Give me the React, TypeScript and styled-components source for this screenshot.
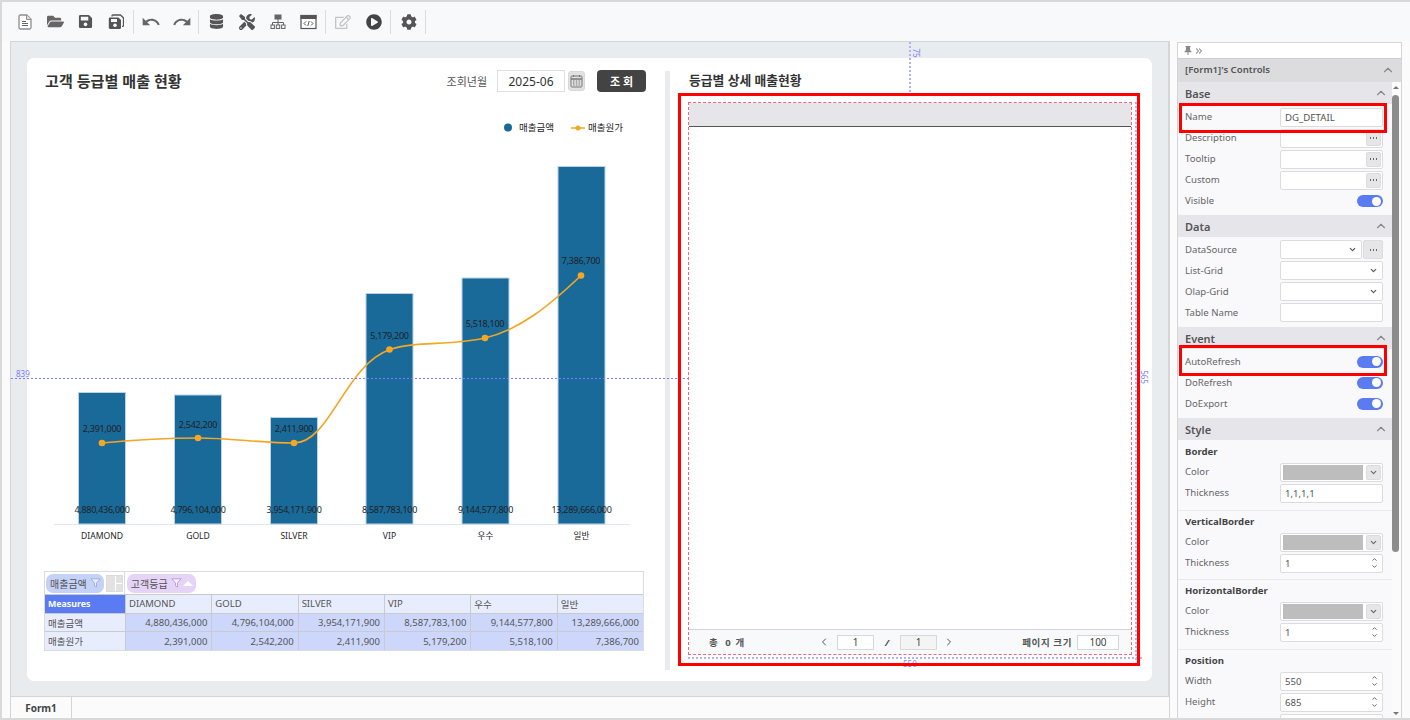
import React from "react";
import styled, { createGlobalStyle } from "styled-components";
import {
  FaCog,
  FaDatabase,
  FaFolderOpen,
  FaPlayCircle,
  FaRegEdit,
  FaSave,
  FaTools,
} from "react-icons/fa";
import { MdRedo, MdUndo } from "react-icons/md";
import { ChevronDown, ChevronLeft, ChevronRight, ChevronUp, ChevronsRight } from "lucide-react";

const GlobalStyle = createGlobalStyle`
  html, body {
    margin: 0;
    padding: 0;
    background: #fbfbfc;
    font-family: "Noto Sans", "Noto Sans CJK KR", sans-serif;
    color: #444;
  }
  * { box-sizing: border-box; }
`;

const bars = [
  { name: "DIAMOND", cx: 102, top: 392.5, value: "4,880,436,000", cost: "2,391,000", px: 102, py: 443, ly: 428.5 },
  { name: "GOLD", cx: 198, top: 395, value: "4,796,104,000", cost: "2,542,200", px: 198, py: 438, ly: 424 },
  { name: "SILVER", cx: 294, top: 417.5, value: "3,954,171,900", cost: "2,411,900", px: 294, py: 443, ly: 428 },
  { name: "VIP", cx: 389.5, top: 293.5, value: "8,587,783,100", cost: "5,179,200", px: 389.5, py: 349.5, ly: 335.5 },
  { name: "우수", cx: 485.5, top: 278, value: "9,144,577,800", cost: "5,518,100", px: 485, py: 338, ly: 323.5 },
  { name: "일반", cx: 581.5, top: 166.5, value: "13,289,666,000", cost: "7,386,700", px: 581, py: 275.5, ly: 260 },
];

const FileIcon = () => (
  <svg width="15" height="16" viewBox="0 0 15 16">
    <path d="M2.5 1h6.2L13 5.2V13.5a1.5 1.5 0 0 1-1.5 1.5h-9A1.5 1.5 0 0 1 1 13.5V2.5A1.5 1.5 0 0 1 2.5 1z" fill="#fff" stroke="#8d8d8d" strokeWidth="1.3" />
    <path d="M8.5 1v4.5H13" fill="#ddd" stroke="#8d8d8d" />
    <path d="M4 7.5h4M4 9.5h6M4 11.5h6" stroke="#666" strokeWidth="1.2" />
  </svg>
);

const SaveAllIcon = () => (
  <svg width="16" height="16" viewBox="0 0 16 16">
    <path d="M4 2.5V1.800c0-.5.4-.8.8-.8h7.700L15.500 4v7.500c0 .5-.4.9-.9.9H14" fill="none" stroke="#555" strokeWidth="1.3" />
    <path d="M2 3.500h8.500L13 6v7.800c0 .7-.5 1.200-1.200 1.200H2c-.7 0-1.200-.5-1.200-1.200V4.700C.8 4 1.300 3.500 2 3.500z" fill="#555" />
    <rect x="3" y="5" width="6" height="3" fill="#fff" />
    <circle cx="7" cy="11.3" r="1.8" fill="#fff" />
  </svg>
);

const SitemapIcon = () => (
  <svg width="16" height="16" viewBox="0 0 16 16" fill="none" stroke="#666" strokeWidth="1">
    <rect x="5" y="1" width="6" height="4" fill="#666" />
    <path d="M8 5v3.500M2.500 11V8.500h11V11M8 8.500V11" />
    <rect x="1" y="11" width="3.4" height="3.5" />
    <rect x="6.3" y="11" width="3.4" height="3.5" />
    <rect x="11.6" y="11" width="3.4" height="3.5" />
  </svg>
);

const CodeWindowIcon = () => (
  <svg width="17" height="16" viewBox="0 0 17 16" fill="none" stroke="#555">
    <rect x="1" y="1.5" width="15" height="13" fill="#fff" strokeWidth="1.2" />
    <rect x="1" y="1.5" width="15" height="3" fill="#555" />
    <path d="M6 7.500 4 9.500l2 2M11 7.500l2 2-2 2M9.200 7l-1.400 5" strokeWidth="1" />
  </svg>
);

const CalendarIcon = () => (
  <svg width="13" height="14" viewBox="0 0 13 14" fill="none" stroke="#777">
    <rect x="1" y="2" width="11" height="11" rx="1" />
    <path d="M1 5h11" strokeWidth="1.5" />
    <path d="M3.500 1v2M9.500 1v2M3 7h1.500M5.800 7h1.500M8.600 7h1.500M3 9h1.500M5.800 9h1.500M8.600 9h1.500M3 11h1.500M5.800 11h1.500M8.600 11h1.500" />
  </svg>
);

const PinIcon = () => (
  <svg width="8" height="9" viewBox="0 0 8 9">
    <path d="M1.500 0h5v1l-.7.5.5 3 1.200 1v.8H4.500V9h-1V6.300H.5v-.8l1.200-1 .5-3-.7-.5z" fill="#888" />
  </svg>
);

const FunnelIcon = ({ color }: { color: string }) => (
  <svg width="11" height="10" viewBox="0 0 11 10">
    <path d="M.8.800h9.400L6.500 5v4L4.500 8V5z" fill="#fff" fillOpacity="0.6" stroke={color} strokeWidth="0.9" />
  </svg>
);

const Toolbar = styled.div`
  display: flex;
  align-items: center;
  height: 39px;
  padding-left: 8px;
  background: #f8f9fb;
  flex-shrink: 0;
`;

const ToolButton = styled.div`
  width: 30.4px;
  height: 30px;
  display: flex;
  align-items: center;
  justify-content: center;
`;

const ToolSep = styled.div`
  width: 1px;
  height: 24px;
  margin: 0 2.4px 0 1.3px;
  background: #dcdce0;
`;

const Frame = styled.div`
  position: relative;
  width: 1410px;
  height: 720px;
  overflow: hidden;
  display: flex;
  flex-direction: column;
  border-top: 2px solid #d9d9d9;
  border-left: 2px solid #d9d9d9;
  border-bottom: 2px solid #d9d9d9;
`;

const Body = styled.div`
  display: flex;
  flex: 1;
  min-height: 0;
`;

const CanvasColumn = styled.div`
  width: 1160px;
  margin-left: 8px;
  display: flex;
  flex-direction: column;
  flex-shrink: 0;
`;

const Designer = styled.div`
  height: 655px;
  padding: 16px 16px 15px 16px;
  background: #e9ecef;
  border-top: 1px solid #d5d5d8;
  border-left: 1px solid #d5d5d8;
  border-right: 2px solid #d5d5d8;
`;

const Card = styled.div`
  display: flex;
  height: 100%;
  width: 1125px;
  background: #fff;
  border-radius: 7px;
`;

const LeftPane = styled.div`
  width: 638px;
  flex-shrink: 0;
`;

const PaneHeader = styled.div`
  display: flex;
  align-items: center;
  height: 22px;
  margin-top: 12px;
  padding-left: 18px;
  padding-right: 19px;
`;

const Title = styled.h2`
  margin: 0 0 3px;
  font-size: 15.1px;
  font-weight: 700;
  color: #333;
  white-space: pre;
`;

const SubTitle = styled(Title)`
  font-size: 12.8px;
`;

const SearchLabel = styled.span`
  margin-left: auto;
  font-size: 11px;
  color: #555;
`;

const MonthInput = styled.div`
  width: 68px;
  height: 22px;
  margin-left: 10px;
  display: flex;
  align-items: center;
  justify-content: center;
  font-size: 12px;
  color: #333;
  border: 1px solid #dfdfdf;
`;

const CalendarButton = styled.div`
  width: 17px;
  height: 20px;
  margin-left: 3px;
  display: flex;
  align-items: center;
  justify-content: center;
  background: #e2e2e4;
  border: 1px solid #d8d8da;
  border-radius: 3px;
`;

const SearchButton = styled.div`
  width: 49px;
  height: 22px;
  margin-left: 12px;
  display: flex;
  align-items: center;
  justify-content: center;
  font-size: 11px;
  font-weight: 700;
  color: #fff;
  background: #434343;
  border-radius: 4px;
  white-space: pre;
`;

const ChartSvg = styled.svg`
  display: block;
  margin-top: 18px;
`;

const ChartText = styled.text<{ $size?: number }>`
  font-family: "Noto Sans", "Noto Sans CJK KR", sans-serif;
  font-size: ${(p) => p.$size ?? 9}px;
  letter-spacing: ${(p) => (p.$size ? 0 : -0.27)}px;
  fill: #1f1f1f;
  text-anchor: middle;
  dominant-baseline: central;
`;

const LegendText = styled(ChartText)`
  text-anchor: start;
`;

const PivotGrid = styled.div`
  width: 600px;
  margin: 16px 0 0 17px;
  border: 1px solid #dcdcde;
  font-size: 9.5px;
`;

const PivotTools = styled.div`
  display: flex;
  align-items: center;
  height: 22px;
  padding-left: 1px;
  background: #fff;
`;

const Chip = styled.div<{ $bg: string }>`
  display: flex;
  align-items: center;
  height: 19px;
  padding: 0 3px 0 4px;
  gap: 3px;
  border-radius: 7px;
  background: ${(p) => p.$bg};
  color: #555;
  font-size: 10px;
`;

const ChipArrow = styled.span`
  width: 0;
  height: 0;
  margin-left: -2px;
  border-left: 5px solid transparent;
  border-right: 5px solid transparent;
  border-bottom: 5px solid #fff;
`;

const LayoutButton = styled.div`
  display: grid;
  grid-template-columns: 8px 6px;
  grid-template-rows: 1fr 1fr;
  gap: 1px;
  width: 17px;
  height: 17px;
  margin: 0 1px 0 2px;
  border: 1px solid #dcdcdc;
  background: #fff;
`;

const LayoutPane = styled.i<{ $tall?: boolean }>`
  display: block;
  background: #e2e2e2;
  ${(p) => (p.$tall ? "grid-row: span 2;" : "")}
`;

const PivotSep = styled.div`
  width: 1px;
  height: 22px;
  margin-right: 2px;
  background: #dcdcde;
`;

const PivotTable = styled.div`
  display: grid;
  grid-template-columns: 80px repeat(6, 1fr);
  grid-auto-rows: 18.7px;
`;

const PivotCell = styled.div<{ $kind: "corner" | "head" | "value" }>`
  display: flex;
  align-items: center;
  padding: 0 4px 0 3px;
  white-space: nowrap;
  border-top: 1px solid #c9cad0;
  border-left: 1px solid #c9cad0;
  justify-content: ${(p) => (p.$kind === "value" ? "flex-end" : "flex-start")};
  background: ${(p) => (p.$kind === "corner" ? "#5b7bf3" : p.$kind === "head" ? "#e8edfd" : "#ccd7fb")};
  color: ${(p) => (p.$kind === "corner" ? "#fff" : "#555")};
  font-weight: ${(p) => (p.$kind === "corner" ? 700 : 400)};
  font-size: ${(p) => (p.$kind === "corner" ? 8.8 : 9.5)}px;
  &:nth-child(7n + 1) {
    border-left: none;
  }
`;

const Divider = styled.div`
  width: 5px;
  height: 599px;
  margin-top: 13px;
  background: #e9ecef;
  flex-shrink: 0;
`;

const RightPane = styled.div`
  flex: 1;
  min-width: 0;
`;

const DetailHeader = styled(PaneHeader)`
  padding-left: 19px;
`;

const DetailGrid = styled.div`
  display: flex;
  flex-direction: column;
  width: 442px;
  height: 551px;
  margin: 11px 0 0 19px;
  outline: 1px dashed #ee6a78;
`;

const DetailHead = styled.div`
  height: 24px;
  background: #e6e6ea;
  border-bottom: 1px solid #555;
`;

const DetailBody = styled.div`
  flex: 1;
  background: #fff;
`;

const DetailFooter = styled.div`
  display: flex;
  align-items: center;
  height: 25px;
  background: #f8f9fb;
  border-top: 1px solid #d5d5d8;
  font-size: 9.5px;
  font-weight: 700;
  color: #555;
`;

const TotalText = styled.span`
  width: 129px;
  padding-left: 20px;
  white-space: pre;
`;

const Pager = styled.div`
  display: flex;
  align-items: center;
  color: #555;
`;

const PagerNext = styled(ChevronRight)`
  margin-left: 6px;
`;

const PageInput = styled.div<{ $w: number; $grey?: boolean }>`
  width: ${(p) => p.$w}px;
  height: 15px;
  display: flex;
  align-items: center;
  justify-content: center;
  font-size: 10px;
  font-weight: 400;
  color: #444;
  background: ${(p) => (p.$grey ? "#f4f4f5" : "#fff")};
  border: 1px solid #d8d8d8;
`;

const FirstPageInput = styled(PageInput)`
  margin-left: 7px;
`;

const PageSlash = styled.span`
  width: 26px;
  text-align: center;
  color: #444;
  font-style: italic;
`;

const PageSizeLabel = styled.span`
  margin-left: auto;
  margin-right: 5px;
  letter-spacing: 0.6px;
  white-space: pre;
`;

const PageSizeBox = styled(PageInput)`
  margin-right: 12px;
`;

const TabBar = styled.div`
  flex: 1;
  display: flex;
  background: #fbfbfc;
  border-top: 1px solid #d5d5d8;
  border-left: 1px solid #d5d5d8;
  border-right: 1px solid #d5d5d8;
`;

const Tab = styled.div`
  width: 61px;
  display: flex;
  align-items: center;
  justify-content: center;
  font-size: 10px;
  font-weight: 700;
  color: #444;
  border-right: 1px solid #d5d5d8;
`;

const Panel = styled.div`
  width: 225px;
  margin: 1px 0 0 7px;
  display: flex;
  flex-direction: column;
  flex-shrink: 0;
  background: #f9f9fc;
  border: 1px solid #d5d5d8;
  border-bottom: none;
  overflow: hidden;
`;

const PinRow = styled.div`
  display: flex;
  align-items: center;
  gap: 2px;
  height: 15px;
  padding-left: 6px;
  background: #fff;
  flex-shrink: 0;
`;

const SectionHead = styled.div<{ $dark?: boolean }>`
  display: flex;
  align-items: center;
  justify-content: space-between;
  height: ${(p) => (p.$dark ? 24 : 22)}px;
  padding: ${(p) => (p.$dark ? "0 6px 2px 7px" : "0 4px 0 7px")};
  flex-shrink: 0;
  font-size: ${(p) => (p.$dark ? 9.6 : 11)}px;
  font-weight: 600;
  color: #555;
  background: ${(p) => (p.$dark ? "#dcdcdf" : "#e6e6ea")};
  border-top: ${(p) => (p.$dark ? "1px solid #ccc" : "none")};
`;

const PanelBody = styled.div`
  display: flex;
  flex: 1;
  min-height: 0;
`;

const PropList = styled.div`
  flex: 1;
  min-width: 0;
  overflow: hidden;
`;

const Group = styled.div<{ $top?: number; $bottom?: number; $ruled?: boolean }>`
  padding: ${(p) => p.$top ?? 2}px 0 ${(p) => p.$bottom ?? 4}px;
  border-bottom: ${(p) => (p.$ruled ? "1px solid #e9e9ee" : "none")};
`;

const PropRow = styled.div`
  display: flex;
  align-items: center;
  height: 21px;
  padding: 0 9px 0 7px;
`;

const PropLabel = styled.span`
  width: 95px;
  flex-shrink: 0;
  font-size: 9.6px;
  color: #666;
  margin-top: -1px;
`;

const SubHead = styled(PropRow)`
  height: 19.5px;
  font-size: 9.6px;
  font-weight: 700;
  color: #444;
`;

const Field = styled.div`
  flex: 1;
  min-width: 0;
  height: 19px;
  display: flex;
  align-items: center;
  justify-content: flex-end;
  padding: 0 1px 0 4px;
  font-size: 9.6px;
  color: #555;
  background: #fff;
  border: 1px solid #dcdcdf;
  border-radius: 2px;
`;

const FieldText = styled.span`
  margin-right: auto;
`;

const DotsButton = styled.div`
  width: 15px;
  height: 15px;
  display: flex;
  align-items: center;
  justify-content: center;
  color: #666;
  background: #e6e6e8;
  border: 1px solid #dcdcde;
  border-radius: 2px;
`;

const SideDots = styled(DotsButton)`
  width: 20px;
  height: 19px;
  margin-left: 1px;
`;

const Dots = styled.span`
  display: block;
  width: 9px;
  height: 2px;
  background: radial-gradient(circle, #666 1px, transparent 1.1px) 0 0 / 3px 2px;
`;

const Swatch = styled.div`
  flex: 1;
  height: 15px;
  background: #bdbdbd;
  margin-left: -2px;
`;

const SwatchButton = styled(DotsButton)`
  margin-left: 3px;
`;

const Spin = styled.div`
  display: flex;
  flex-direction: column;
  align-items: center;
  margin-right: 3px;
  color: #555;
`;

const Toggle = styled.div`
  width: 26px;
  height: 12px;
  margin-left: auto;
  padding: 0 2px;
  display: flex;
  align-items: center;
  justify-content: flex-end;
  border-radius: 6px;
  background: #5b7bf3;
`;

const Knob = styled.div`
  width: 9px;
  height: 9px;
  border-radius: 50%;
  background: #fff;
`;

const ScrollTrack = styled.div`
  position: relative;
  width: 9px;
  flex-shrink: 0;
  background: #fbfbfc;
`;

const ScrollThumb = styled.div`
  position: absolute;
  left: 0;
  top: 13px;
  width: 7px;
  height: 457px;
  border-radius: 4px;
  background: #8c8c8c;
`;

const ScrollArrow = styled.div<{ $down?: boolean }>`
  position: absolute;
  left: 1px;
  ${(p) => (p.$down ? "bottom: 3px;" : "top: 4px;")}
  width: 0;
  height: 0;
  border-left: 3px solid transparent;
  border-right: 3px solid transparent;
  ${(p) => (p.$down ? "border-top: 3px solid #777;" : "border-bottom: 3px solid #777;")}
`;

// designer overlays, these sit on top of the form so they use page coordinates
const Highlight = styled.div<{ $x: number; $y: number; $w: number; $h: number }>`
  position: absolute;
  left: ${(p) => p.$x - 2}px;
  top: ${(p) => p.$y - 2}px;
  width: ${(p) => p.$w}px;
  height: ${(p) => p.$h}px;
  border: 3px solid #f00;
  pointer-events: none;
`;

const GuideH = styled.div<{ $x: number; $y: number; $w: number; $thick?: boolean }>`
  position: absolute;
  left: ${(p) => p.$x - 2}px;
  top: ${(p) => p.$y - 2}px;
  width: ${(p) => p.$w}px;
  height: ${(p) => (p.$thick ? 2 : 1)}px;
  background: repeating-linear-gradient(
    to right,
    ${(p) => (p.$thick ? "#b0b0ff" : "#7d7dff")} 0 2px,
    transparent 2px 4px
  );
`;

const GuideV = styled.div<{ $x: number; $y: number; $h: number }>`
  position: absolute;
  left: ${(p) => p.$x - 2}px;
  top: ${(p) => p.$y - 2}px;
  width: 2px;
  height: ${(p) => p.$h}px;
  background: repeating-linear-gradient(to bottom, #b0b0ff 0 2px, transparent 2px 4px);
`;

const GuideLabel = styled.span<{ $x: number; $y: number; $turn?: boolean }>`
  position: absolute;
  left: ${(p) => p.$x - 2}px;
  top: ${(p) => p.$y - 2}px;
  font-size: 8px;
  line-height: 8px;
  color: #7d7dff;
  ${(p) => (p.$turn ? "transform: rotate(90deg);" : "")}
`;

const tools = [
  <FileIcon />,
  <FaFolderOpen size={17} color="#666" />,
  <FaSave size={15} color="#555" />,
  <SaveAllIcon />,
  null,
  <MdUndo size={20} color="#666" />,
  <MdRedo size={20} color="#666" />,
  null,
  <FaDatabase size={15} color="#555" />,
  <FaTools size={16} color="#555" />,
  <SitemapIcon />,
  <CodeWindowIcon />,
  null,
  <FaRegEdit size={16} color="#c4c4c4" />,
  <FaPlayCircle size={16} color="#444" />,
  null,
  <FaCog size={16} color="#555" />,
  null,
];

const SpinBox = () => (
  <Spin>
    <ChevronUp size={7} strokeWidth={3} />
    <ChevronDown size={7} strokeWidth={3} />
  </Spin>
);

const DotsField = ({ label }: { label: string }) => (
  <PropRow>
    <PropLabel>{label}</PropLabel>
    <Field>
      <DotsButton>
        <Dots />
      </DotsButton>
    </Field>
  </PropRow>
);

const ToggleRow = ({ label }: { label: string }) => (
  <PropRow>
    <PropLabel>{label}</PropLabel>
    <Toggle>
      <Knob />
    </Toggle>
  </PropRow>
);

const SelectRow = ({ label }: { label: string }) => (
  <PropRow>
    <PropLabel>{label}</PropLabel>
    <Field>
      <Spin>
        <ChevronDown size={9} strokeWidth={3} />
      </Spin>
    </Field>
  </PropRow>
);

const TextRow = ({ label, value }: { label: string; value?: string }) => (
  <PropRow>
    <PropLabel>{label}</PropLabel>
    <Field>
      <FieldText>{value}</FieldText>
    </Field>
  </PropRow>
);

const SpinRow = ({ label, value }: { label: string; value?: string }) => (
  <PropRow>
    <PropLabel>{label}</PropLabel>
    <Field>
      <FieldText>{value}</FieldText>
      <SpinBox />
    </Field>
  </PropRow>
);

const ColorRow = () => (
  <PropRow>
    <PropLabel>Color</PropLabel>
    <Field>
      <Swatch />
      <SwatchButton>
        <ChevronDown size={9} strokeWidth={3} />
      </SwatchButton>
    </Field>
  </PropRow>
);

const Section = ({ title }: { title: string }) => (
  <SectionHead>
    {title}
    <ChevronUp size={14} color="#888" />
  </SectionHead>
);

const App = () => {
  const heads = ["DIAMOND", "GOLD", "SILVER", "VIP", "우수", "일반"];
  return (
    <>
      <GlobalStyle />
      <Frame>
        <Toolbar>
          {tools.map((icon, i) =>
            icon ? <ToolButton key={i}>{icon}</ToolButton> : <ToolSep key={i} />
          )}
        </Toolbar>
        <Body>
          <CanvasColumn>
            <Designer>
              <Card>
                <LeftPane>
                  <PaneHeader>
                    <Title>고객 등급별 매출 현황</Title>
                    <SearchLabel>조회년월</SearchLabel>
                    <MonthInput>2025-06</MonthInput>
                    <CalendarButton>
                      <CalendarIcon />
                    </CalendarButton>
                    <SearchButton>조 회</SearchButton>
                  </PaneHeader>
                  <ChartSvg width="638" height="445" viewBox="27 110 638 445">
                    <circle cx="508" cy="127.5" r="4" fill="#1a6a99" />
                    <LegendText x="519" y="127.5" $size={9.5}>매출금액</LegendText>
                    <path d="M571 128h14" stroke="#f5a623" strokeWidth="1.5" />
                    <circle cx="578" cy="128" r="2.5" fill="#f5a623" />
                    <LegendText x="588" y="127.5" $size={9.5}>매출원가</LegendText>
                    <path d="M54 524.5H630" stroke="#dfe6f5" strokeWidth="1" />
                    {bars.map((b) => (
                      <rect
                        key={b.name}
                        x={b.cx - 23.5}
                        y={b.top}
                        width="47"
                        height={524 - b.top}
                        fill="#1a6a99"
                        stroke="#bcd2e6"
                        strokeWidth="1"
                      />
                    ))}
                    <path
                      d="M102 443C134 440 166 438 198 438C230 438 262 443 294 443C330 443 345 365 390 349.5C415 341 450 346 485 338C520 330 550 305 581 275.5"
                      fill="none"
                      stroke="#f5a623"
                      strokeWidth="1.7"
                    />
                    {bars.map((b) => (
                      <circle key={b.name} cx={b.px} cy={b.py} r="3.3" fill="#f5a623" />
                    ))}
                    {bars.map((b) => (
                      <React.Fragment key={b.name}>
                        <ChartText x={b.px} y={b.ly}>{b.cost}</ChartText>
                        <ChartText x={b.cx} y="509">{b.value}</ChartText>
                        <ChartText x={b.cx} y="535.5" $size={8.6}>{b.name}</ChartText>
                      </React.Fragment>
                    ))}
                  </ChartSvg>
                  <PivotGrid>
                    <PivotTools>
                      <Chip $bg="#c5d2f7">
                        매출금액
                        <FunnelIcon color="#9aa9d8" />
                      </Chip>
                      <LayoutButton>
                        <LayoutPane $tall />
                        <LayoutPane />
                        <LayoutPane />
                      </LayoutButton>
                      <PivotSep />
                      <Chip $bg="#e6d4f7">
                        고객등급
                        <FunnelIcon color="#b79ad8" />
                        <ChipArrow />
                      </Chip>
                    </PivotTools>
                    <PivotTable>
                      <PivotCell $kind="corner">Measures</PivotCell>
                      {heads.map((h) => (
                        <PivotCell key={h} $kind="head">{h}</PivotCell>
                      ))}
                      <PivotCell $kind="head">매출금액</PivotCell>
                      {bars.map((b) => (
                        <PivotCell key={b.name} $kind="value">{b.value}</PivotCell>
                      ))}
                      <PivotCell $kind="head">매출원가</PivotCell>
                      {bars.map((b) => (
                        <PivotCell key={b.name} $kind="value">{b.cost}</PivotCell>
                      ))}
                    </PivotTable>
                  </PivotGrid>
                </LeftPane>
                <Divider />
                <RightPane>
                  <DetailHeader>
                    <SubTitle>등급별 상세 매출현황</SubTitle>
                  </DetailHeader>
                  <DetailGrid>
                    <DetailHead />
                    <DetailBody />
                    <DetailFooter>
                      <TotalText>총   0  개</TotalText>
                      <Pager>
                        <ChevronLeft size={12} />
                        <FirstPageInput $w={37}>1</FirstPageInput>
                        <PageSlash>/</PageSlash>
                        <PageInput $w={37} $grey>1</PageInput>
                        <PagerNext size={12} />
                      </Pager>
                      <PageSizeLabel>페이지 크기</PageSizeLabel>
                      <PageSizeBox $w={42}>100</PageSizeBox>
                    </DetailFooter>
                  </DetailGrid>
                </RightPane>
              </Card>
            </Designer>
            <TabBar>
              <Tab>Form1</Tab>
            </TabBar>
          </CanvasColumn>
          <Panel>
            <PinRow>
              <PinIcon />
              <ChevronsRight size={10} color="#888" strokeWidth={2.5} />
            </PinRow>
            <SectionHead $dark>
              [Form1]'s Controls
              <ChevronUp size={14} color="#888" />
            </SectionHead>
            <PanelBody>
              <PropList>
                <Section title="Base" />
                <Group $top={2.5} $bottom={3.5}>
                  <TextRow label="Name" value="DG_DETAIL" />
                  <DotsField label="Description" />
                  <DotsField label="Tooltip" />
                  <DotsField label="Custom" />
                  <ToggleRow label="Visible" />
                </Group>
                <Section title="Data" />
                <Group>
                  <PropRow>
                    <PropLabel>DataSource</PropLabel>
                    <Field>
                      <Spin>
                        <ChevronDown size={9} strokeWidth={3} />
                      </Spin>
                    </Field>
                    <SideDots>
                      <Dots />
                    </SideDots>
                  </PropRow>
                  <SelectRow label="List-Grid" />
                  <SelectRow label="Olap-Grid" />
                  <TextRow label="Table Name" />
                </Group>
                <Section title="Event" />
                <Group>
                  <ToggleRow label="AutoRefresh" />
                  <ToggleRow label="DoRefresh" />
                  <ToggleRow label="DoExport" />
                </Group>
                <Section title="Style" />
                <Group $ruled $bottom={6.5}>
                  <SubHead>Border</SubHead>
                  <ColorRow />
                  <TextRow label="Thickness" value="1,1,1,1" />
                </Group>
                <Group $ruled $top={1} $bottom={5.5}>
                  <SubHead>VerticalBorder</SubHead>
                  <ColorRow />
                  <SpinRow label="Thickness" value="1" />
                </Group>
                <Group $ruled $top={1} $bottom={6.5}>
                  <SubHead>HorizontalBorder</SubHead>
                  <ColorRow />
                  <SpinRow label="Thickness" value="1" />
                </Group>
                <Group $top={1}>
                  <SubHead>Position</SubHead>
                  <SpinRow label="Width" value="550" />
                  <SpinRow label="Height" value="685" />
                  <SpinRow label="" />
                </Group>
              </PropList>
              <ScrollTrack>
                <ScrollArrow />
                <ScrollThumb />
                <ScrollArrow $down />
              </ScrollTrack>
            </PanelBody>
          </Panel>
        </Body>

        <GuideH $x={11} $y={378} $w={677} />
        <GuideV $x={909} $y={42} $h={56} />
        <GuideV $x={1135} $y={102} $h={560} />
        <GuideH $x={688} $y={657} $w={455} $thick />
        <GuideLabel $x={16} $y={370}>839</GuideLabel>
        <GuideLabel $x={911} $y={49} $turn>75</GuideLabel>
        <GuideLabel $x={1137} $y={373} $turn>565</GuideLabel>
        <GuideLabel $x={903} $y={660}>550</GuideLabel>
        <Highlight $x={678} $y={93} $w={462} $h={573} />
        <Highlight $x={1179} $y={103} $w={208} $h={30} />
        <Highlight $x={1179} $y={345} $w={208} $h={31} />
      </Frame>
    </>
  );
};

export default App;
